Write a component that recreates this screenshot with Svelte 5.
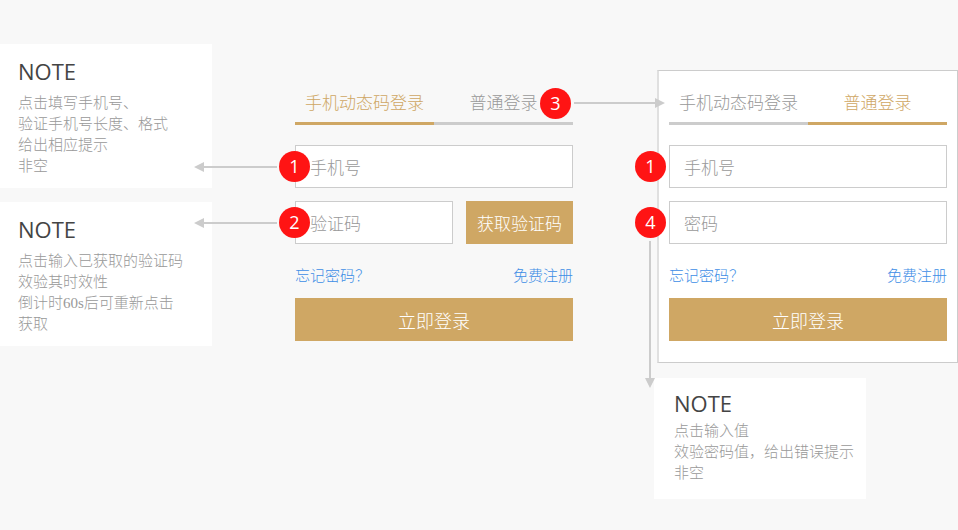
<script>
  const notes = [
    ['点击填写手机号、', '验证手机号长度、格式', '给出相应提示', '非空'],
    ['点击输入已获取的验证码', '效验其时效性', '倒计时60s后可重新点击', '获取']
  ];
  const passwordNote = ['点击输入值', '效验密码值，给出错误提示', '非空'];
  const tabs = ['手机动态码登录', '普通登录'];
</script>

{#snippet note(lines, compact)}
  <section class="note" class:compact>
    <h2>NOTE</h2>
    <p>
      {#each lines as line}<span>{line}</span>{/each}
    </p>
  </section>
{/snippet}

{#snippet arrowLeft()}
  <svg class="arrow to-note" width="83" height="10" viewBox="0 0 83 10" aria-hidden="true">
    <path d="M0 5 10 0V4H83V6H10V10Z" />
  </svg>
{/snippet}

{#snippet tabBar(active)}
  <div class="tabs" role="tablist">
    {#each tabs as tab, i}
      <button type="button" role="tab" aria-selected={i === active} class:active={i === active}>{tab}</button>
    {/each}
    {#if active === 0}
      <b class="badge on-tab">3</b>
      <svg class="arrow to-panel" width="91" height="10" viewBox="0 0 91 10" aria-hidden="true">
        <path d="M0 4H81V0L91 5 81 10V6H0Z" />
      </svg>
    {/if}
  </div>
{/snippet}

{#snippet footer()}
  <div class="links">
    <a href="#forgot">忘记密码？</a>
    <a href="#register">免费注册</a>
  </div>
  <button type="submit" class="gold submit">立即登录</button>
{/snippet}

<main>
  <div class="notes">
    {#each notes as lines}
      {@render note(lines, false)}
    {/each}
  </div>

  <form class="login code-login" onsubmit={(e) => e.preventDefault()}>
    {@render tabBar(0)}
    <div class="field">
      <input type="tel" aria-label="手机号" placeholder="手机号" />
      <b class="badge over-edge">1</b>
      {@render arrowLeft()}
    </div>
    <div class="field">
      <input type="text" aria-label="验证码" placeholder="验证码" />
      <button type="button" class="gold get-code">获取验证码</button>
      <b class="badge over-edge">2</b>
      {@render arrowLeft()}
    </div>
    {@render footer()}
  </form>

  <div class="side">
    <form class="login panel" onsubmit={(e) => e.preventDefault()}>
      {@render tabBar(1)}
      <div class="field">
        <input type="tel" aria-label="手机号" placeholder="手机号" />
        <b class="badge outside">1</b>
      </div>
      <div class="field">
        <input type="password" aria-label="密码" placeholder="密码" />
        <b class="badge outside">4</b>
        <svg class="arrow to-below" width="10" height="147" viewBox="0 0 10 147" aria-hidden="true">
          <path d="M4 0H6V137H10L5 147 0 137H4Z" />
        </svg>
      </div>
      {@render footer()}
    </form>
    {@render note(passwordNote, true)}
  </div>
</main>

<style>
  :global(body) {
    margin: 0;
    background: #f8f8f8;
  }

  main {
    display: grid;
    grid-template-columns: 212px 83px minmax(0, 278fr) 81px minmax(0, 304fr);
    align-items: start;
    padding: 44px 0 31px;
    font-family: 'Noto Sans CJK SC', sans-serif;
    font-weight: 300;
    color: #999;
  }

  button,
  input {
    box-sizing: border-box;
    margin: 0;
    font: inherit;
    color: inherit;
    border-radius: 0;
  }

  .notes {
    grid-column: 1;
    display: flex;
    flex-direction: column;
    gap: 14px;
  }

  .note {
    box-sizing: border-box;
    width: 212px;
    padding: 12px 0 11px 18px;
    background: #fff;
  }

  .note h2 {
    margin: 0 0 7px;
    font: 500 22px/30px 'Open Sans', sans-serif;
    color: #444;
  }

  .note p {
    margin: 0;
    font-family: 'Liberation Serif', 'Noto Sans CJK SC', sans-serif;
    font-size: 15px;
    line-height: 21px;
  }

  .note span {
    display: block;
    white-space: nowrap;
  }

  .note.compact {
    padding: 10px 0 15px 20px;
  }

  .note.compact h2 {
    margin-bottom: 3px;
  }

  .login {
    font-size: 17px;
  }

  .code-login {
    grid-column: 3;
    margin-top: 37px;
  }

  .side {
    grid-column: 5;
    display: flex;
    flex-direction: column;
    gap: 15px;
    margin-top: 26px;
  }

  .panel {
    margin-left: 3px;
    padding: 10px 10px 21px;
    background: #fff;
    border: 1px solid #ccc;
    border-left: 2px solid #e0e0e0;
  }

  .tabs {
    position: relative;
    display: flex;
    margin-bottom: 20px;
  }

  .tabs button {
    flex: 1;
    height: 44px;
    padding: 0;
    background: none;
    border: 0;
    border-bottom: 3px solid #ccc;
    white-space: nowrap;
  }

  .tabs .active {
    color: #cfa764;
    border-color: #cfa764;
  }

  .field {
    position: relative;
    display: flex;
    gap: 13px;
  }

  .field + .field {
    margin-top: 13px;
  }

  .field input {
    flex: 1;
    min-width: 0;
    height: 43px;
    padding: 0 14px;
    background: #fff;
    border: 1px solid #ccc;
  }

  .field input::placeholder {
    color: #999;
    opacity: 1;
  }

  .gold {
    height: 43px;
    padding: 0;
    background: #cfa764;
    border: 0;
    color: #fff;
  }

  .get-code {
    flex: none;
    width: 107px;
  }

  .submit {
    display: block;
    width: 100%;
    font-size: 18px;
  }

  .links {
    display: flex;
    justify-content: space-between;
    padding: 20px 0 12px;
    font-size: 15px;
    line-height: 22px;
  }

  .links a {
    color: #3d8ee6;
    text-decoration: none;
  }

  .badge {
    position: absolute;
    width: 31px;
    height: 31px;
    border-radius: 50%;
    background: #ff1414;
    color: #fff;
    font: 400 18px/30px 'Open Sans', sans-serif;
    text-align: center;
  }

  .over-edge {
    top: 6px;
    left: -16px;
  }

  .outside {
    top: 6px;
    left: -34px;
  }

  .on-tab {
    top: 7px;
    right: 2px;
  }

  .arrow {
    position: absolute;
    fill: #ccc;
  }

  .to-note {
    top: 17px;
    left: -101px;
  }

  .to-panel {
    top: 17px;
    left: calc(100% + 1px);
  }

  .to-below {
    top: 40px;
    left: -24px;
  }
</style>
